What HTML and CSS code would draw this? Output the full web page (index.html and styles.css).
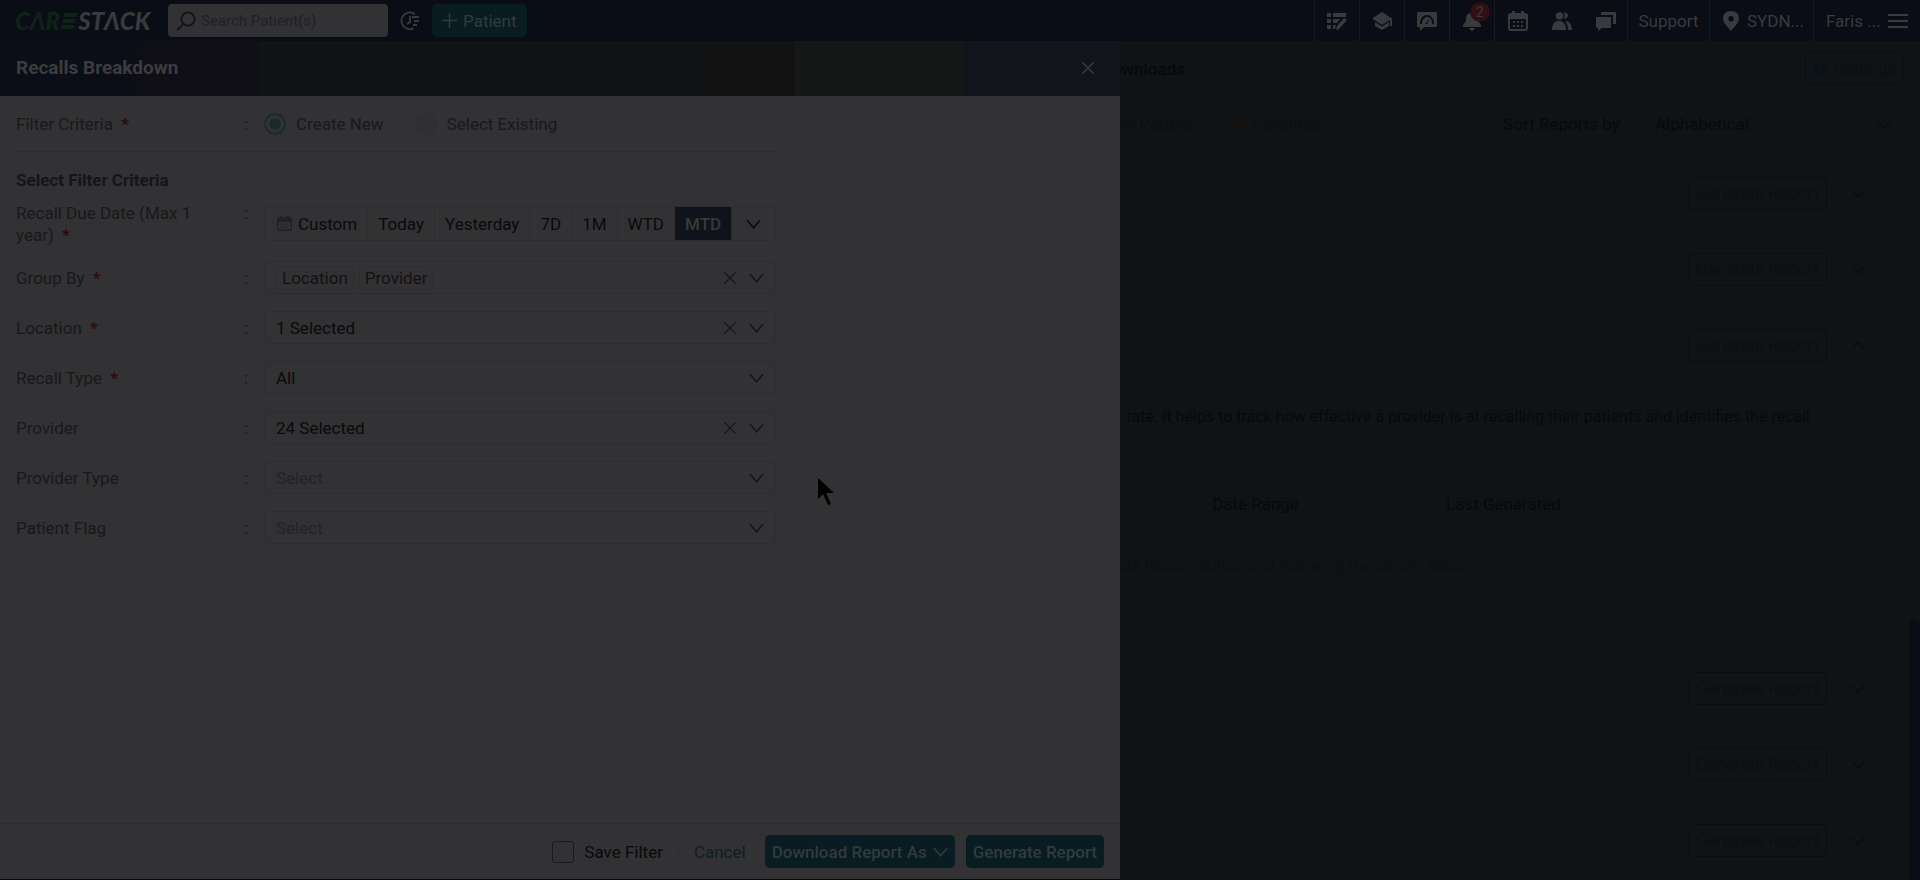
FILE: index.html
```html
<!DOCTYPE html>
<html lang="en">
  <head>
    <meta charset="UTF-8">
    <title>CareStack : Recalls Breakdown</title>
    <link rel="stylesheet" href="styles.css">
  </head>
  <body>
    <svg class="sprite" width="0" height="0">
      <symbol id="chevron" viewBox="0 0 16 10"><path d="M1 1l7 8 7-8" fill="none" stroke="currentColor" stroke-width="1.7"/></symbol>
      <symbol id="cross" viewBox="0 0 12 12"><path d="M.5.5l11 11M11.5.5l-11 11" fill="none" stroke="currentColor" stroke-width="1.4"/></symbol>
      <symbol id="calendar" viewBox="0 0 20 20"><path fill="currentColor" fill-rule="evenodd" d="M3 2h1V0h3v2h6V0h3v2h1q3 0 3 3v12q0 3-3 3H3q-3 0-3-3V5q0-3 3-3zM2 8v9q0 1 1 1h14q1 0 1-1V8zm3 2h2v2H5zm4 0h2v2H9zm4 0h2v2h-2zm-8 4h2v2H5zm4 0h2v2H9zm4 0h2v2h-2z"/></symbol>
    </svg>

    <header class="topbar">
      <a href="#" class="logo">
        <span>CΛR</span>
        <svg width="18" height="16" viewBox="0 0 17 16"><path fill="currentColor" d="M4 0h13l-1 4H3zM3 6h12l-1 4H2zM1 12h13l-1 4H0z"/></svg>
        STΛCK
      </a>
      <div class="search">
        <svg width="20" height="20" viewBox="0 0 20 20"><g fill="none" stroke="currentColor" stroke-width="1.7"><circle cx="12" cy="8" r="6.6"/><path d="M7.4 12.8L1 19.4"/></g></svg>
        <input type="text" placeholder="Search Patient(s)" aria-label="Search Patient(s)">
      </div>
      <button class="recent" aria-label="Recent patients">
        <svg width="20" height="20" viewBox="0 0 20 20"><path d="M15 3.2A8.4 8.4 0 1 0 13.5 17.4M10 5v6l-3 2M12 6h7M14 10h5M13 14h4" fill="none" stroke="currentColor" stroke-width="1.8"/></svg>
      </button>
      <button class="btn add-patient">
        <svg width="15" height="15" viewBox="0 0 15 15"><path d="M7.5 0v15M0 7.5h15" stroke="currentColor" stroke-width="1.5"/></svg>
        Patient
      </button>
      <nav class="tools">
        <a href="#" class="tool" aria-label="Tasks">
          <svg width="20" height="20" viewBox="0 0 20 20"><path fill="currentColor" d="M0 2h4v4H0zm6 0h13v4H6zM0 8h4v4H0zm6 0h7l-3 4H6zm-6 6h4v4H0zm6 0h3l-1 4H6zM17 7l3 2-8 9-3 1 1-4z"/></svg>
        </a>
        <a href="#" class="tool" aria-label="Learning">
          <svg width="20" height="20" viewBox="0 0 20 20"><path fill="currentColor" d="M10 1l10 6.5V15h-2V9l-8 5L0 7.500zM3 11l7 4.500 7-4.500v4l-7 4-7-4z"/></svg>
        </a>
        <a href="#" class="tool" aria-label="Insights">
          <svg width="20" height="20" viewBox="0 0 20 20"><path fill="currentColor" fill-rule="evenodd" d="M1 1h18q1 0 1 1v13q0 1-1 1H7l-4 4v-4H1q-1 0-1-1V2q0-1 1-1zM3 13h2c0-9 10-9 10-1v1h2C17 1 3 1 3 13zm5 0h2l3-6z"/></svg>
        </a>
        <a href="#" class="tool" aria-label="Notifications">
          <svg width="20" height="20" viewBox="0 0 20 20"><path fill="currentColor" d="M10 0q2 0 2 2c4 1 4 4 4 8l3 4v2H1v-2l3-4c0-4 0-7 4-8q0-2 2-2zM7 17h6q-1 3-3 3t-3-3z"/></svg>
          <span class="badge">2</span>
        </a>
        <div class="tool-group">
          <a href="#" aria-label="Calendar"><svg width="20" height="20"><use href="#calendar"/></svg></a>
          <a href="#" aria-label="Patients"><svg width="20" height="20" viewBox="0 0 20 20"><g fill="currentColor"><circle cx="7.500" cy="5" r="3.700"/><path d="M0 18c0-11 14-11 14 0v1H0zM11.500 1.500c6-1 6 7 0 6 1.500-2 1.500-4 0-6zM13 10c5 0 7 4 7 9h-4c0-4-1-7-3-9z"/></g></svg></a>
          <a href="#" aria-label="Messages"><svg width="20" height="20" viewBox="0 0 20 20"><path fill="currentColor" d="M6 1h13q1 0 1 1v11h-3V4H5V2q0-1 1-1zM1 6h13q1 0 1 1v9q0 1-1 1H6l-4 3v-3H1q-1 0-1-1V7q0-1 1-1z"/></svg></a>
        </div>
        <a href="#" class="support">Support</a>
        <a href="#" class="place">
          <svg width="16" height="20" viewBox="0 0 16 20"><path fill="currentColor" fill-rule="evenodd" d="M8 0c5 0 8 3 8 7.500C16 12 11 16 8 20 5 16 0 12 0 7.500 0 3 3 0 8 0zm0 5a2.800 2.800 0 1 0 .1 0z"/></svg>
          SYDN...
        </a>
        <a href="#" class="user">
          Faris ...
          <svg width="20" height="16" viewBox="0 0 20 16"><path d="M0 2h20M0 8h20M0 14h20" stroke="currentColor" stroke-width="2"/></svg>
        </a>
      </nav>
    </header>

    <main class="page">
      <div class="page-head">
        <a href="#" class="tab">Downloads</a>
        <button class="outline settings">
          <svg width="15" height="15" viewBox="0 0 16 16"><g fill="none" stroke="currentColor"><circle cx="8" cy="8" r="4" stroke-width="3"/><path d="M8 0v3M8 13v3M1 4l3 2M12 10l3 2M1 12l3-2M12 6l3-2" stroke-width="3"/></g></svg>
          Settings
        </button>
      </div>
      <div class="page-filters">
        <a href="#" class="quick">New Patient</a>
        <a href="#" class="quick favorites">
          <svg width="16" height="16" viewBox="0 0 16 16"><path fill="currentColor" d="M8 0l2.300 5.300L16 6l-4.200 3.800L13 16l-5-3.200L3 16l1.200-6.200L0 6l5.700-.7z"/></svg>
          Favorites
        </a>
        <label class="sort-label" for="sort">Sort Reports by</label>
        <span>:</span>
        <div class="sort">
          <select id="sort"><option>Alphabetical</option></select>
          <svg class="arrow" width="15" height="9"><use href="#chevron"/></svg>
        </div>
      </div>

      <section class="reports">
        <div class="report"><button class="outline">Generate Report</button><svg class="arrow" width="15" height="9"><use href="#chevron"/></svg></div>
        <div class="report"><button class="outline">Generate Report</button><svg class="arrow" width="15" height="9"><use href="#chevron"/></svg></div>
        <div class="report"><button class="outline">Generate Report</button><svg class="arrow up" width="15" height="9"><use href="#chevron"/></svg></div>
        <div class="details">
          <p class="about">rate. It helps to track how effective a provider is at recalling their patients and identifies the recall</p>
          <table class="history">
            <thead><tr><th>Date Range</th><th>Last Generated</th></tr></thead>
          </table>
          <p class="empty">clicking the 'Generate Report' button and following the simple steps.</p>
        </div>
        <div class="report"><button class="outline">Generate Report</button><svg class="arrow" width="15" height="9"><use href="#chevron"/></svg></div>
        <div class="report"><button class="outline">Generate Report</button><svg class="arrow" width="15" height="9"><use href="#chevron"/></svg></div>
        <div class="report"><button class="outline">Generate Report</button><svg class="arrow" width="15" height="9"><use href="#chevron"/></svg></div>
      </section>
      <div class="scrollbar"></div>
    </main>

    <form class="drawer">
      <div class="drawer-head">
        <h1>Recalls Breakdown</h1>
        <button type="button" class="close" aria-label="Close"><svg width="12" height="12"><use href="#cross"/></svg></button>
      </div>

      <div class="drawer-body">
        <div class="row criteria">
          <span class="label">Filter Criteria <b>*</b></span><span>:</span>
          <div class="radios">
            <label><input type="radio" name="criteria" checked>Create New</label>
            <label><input type="radio" name="criteria">Select Existing</label>
          </div>
        </div>

        <h2>Select Filter Criteria</h2>

        <div class="row due">
          <span class="label">Recall Due Date (Max 1 year) <b>*</b></span><span>:</span>
          <div class="range">
            <button type="button" class="custom"><svg width="15" height="15"><use href="#calendar"/></svg>Custom</button>
            <button type="button">Today</button>
            <button type="button">Yesterday</button>
            <button type="button">7D</button>
            <button type="button">1M</button>
            <button type="button">WTD</button>
            <button type="button" class="active">MTD</button>
            <button type="button" class="more" aria-label="More ranges"><svg width="15" height="10"><use href="#chevron"/></svg></button>
          </div>
        </div>

        <div class="fields">
          <div class="row">
            <span class="label">Group By <b>*</b></span><span>:</span>
            <div class="field">
              <div class="chips"><span>Location</span><span>Provider</span></div>
              <button type="button" class="clear" aria-label="Clear"><svg width="12" height="12"><use href="#cross"/></svg></button>
              <svg class="arrow" width="15" height="10"><use href="#chevron"/></svg>
            </div>
          </div>
          <div class="row">
            <label class="label" for="location">Location <b>*</b></label><span>:</span>
            <div class="field">
              <select id="location"><option>1 Selected</option></select>
              <button type="button" class="clear" aria-label="Clear"><svg width="12" height="12"><use href="#cross"/></svg></button>
              <svg class="arrow" width="15" height="10"><use href="#chevron"/></svg>
            </div>
          </div>
          <div class="row">
            <label class="label" for="recall-type">Recall Type <b>*</b></label><span>:</span>
            <div class="field">
              <select id="recall-type"><option>All</option></select>
              <svg class="arrow" width="15" height="10"><use href="#chevron"/></svg>
            </div>
          </div>
          <div class="row">
            <label class="label" for="provider">Provider</label><span>:</span>
            <div class="field">
              <select id="provider"><option>24 Selected</option></select>
              <button type="button" class="clear" aria-label="Clear"><svg width="12" height="12"><use href="#cross"/></svg></button>
              <svg class="arrow" width="15" height="10"><use href="#chevron"/></svg>
            </div>
          </div>
          <div class="row">
            <label class="label" for="provider-type">Provider Type</label><span>:</span>
            <div class="field">
              <select id="provider-type" class="blank"><option>Select</option></select>
              <svg class="arrow" width="15" height="10"><use href="#chevron"/></svg>
            </div>
          </div>
          <div class="row">
            <label class="label" for="patient-flag">Patient Flag</label><span>:</span>
            <div class="field">
              <select id="patient-flag" class="blank"><option>Select</option></select>
              <svg class="arrow" width="15" height="10"><use href="#chevron"/></svg>
            </div>
          </div>
        </div>
      </div>

      <div class="drawer-foot">
        <label class="save"><input type="checkbox">Save Filter</label>
        <a href="#" class="cancel">Cancel</a>
        <button type="button" class="btn download">Download Report As <svg width="15" height="10"><use href="#chevron"/></svg></button>
        <button type="button" class="btn">Generate Report</button>
      </div>
    </form>

    <svg class="cursor" width="16" height="28" viewBox="0 0 16 28"><path d="M0 0v21l5-5 5 11 3-1-5-11h8z"/></svg>
  </body>
</html>
```
FILE: styles.css
```css
:root {
  --bar: #0a0d16;
  --page: #0f1315;
  --panel: #323133;
  --line: #2d2d2e;
  --label: #18191b;
  --ink: #0a0a0b;
  --teal: #081c21;
}
* {
  box-sizing: border-box;
}
body {
  margin: 0;
  height: 100vh;
  display: flex;
  flex-direction: column;
  position: relative;
  overflow: hidden;
  background: var(--page);
  color: var(--ink);
  font-family: Roboto, "Liberation Sans", sans-serif;
  font-size: 17px;
  line-height: 22px;
}
button, input, select {
  font: inherit;
  color: inherit;
  margin: 0;
  padding: 0;
  border: 0;
  background: none;
}
select {
  appearance: none;
}
a {
  color: inherit;
  text-decoration: none;
}
svg {
  display: block;
  flex: none;
}
h1, h2, p {
  margin: 0;
}
.sprite {
  position: absolute;
}

/* top bar */
.topbar {
  flex: none;
  height: 41px;
  display: flex;
  align-items: center;
  background: var(--bar);
  color: #393a3d;
}
.logo {
  width: 153px;
  padding-left: 15px;
  display: flex;
  align-items: center;
  font: italic 900 24px/24px Lato, sans-serif;
  white-space: nowrap;
}
.logo span, .logo svg {
  color: #0f2218;
}
.search {
  width: 220px;
  height: 33px;
  margin-left: 15px;
  padding: 0 8px;
  display: flex;
  align-items: center;
  gap: 5px;
  background: var(--panel);
  border-radius: 4px;
  color: #111214;
}
.search input {
  flex: 1;
  min-width: 0;
  font-size: 15px;
}
.search input::placeholder {
  color: #202224;
  opacity: 1;
}
.recent {
  margin: 0 12px;
}
.btn {
  height: 33px;
  display: flex;
  align-items: center;
  gap: 6px;
  padding: 0 7px;
  border-radius: 5px;
  background: var(--teal);
  color: #343a3c;
  font-weight: 500;
}
.add-patient {
  padding: 0 10px;
  font-weight: 400;
}
.tools {
  margin-left: auto;
  height: 100%;
  display: flex;
}
.tools > * {
  display: flex;
  align-items: center;
  border-left: 1px solid #16191f;
}
.tool {
  width: 45px;
  justify-content: center;
  position: relative;
}
.badge {
  position: absolute;
  left: 20px;
  top: 2px;
  width: 20px;
  height: 20px;
  border-radius: 50%;
  background: #2f0f12;
  font-size: 14px;
  line-height: 20px;
  text-align: center;
}
.tool-group {
  width: 133px;
  padding-left: 13px;
  gap: 24px;
}
.support {
  width: 82px;
  justify-content: center;
}
.place {
  width: 104px;
  padding-left: 13px;
  gap: 8px;
}
.user {
  width: 107px;
  padding: 0 12px;
  justify-content: space-between;
}

/* reports page */
.page {
  flex: 1;
  position: relative;
  display: flex;
  flex-direction: column;
  padding-right: 16px;
  color: #07090b;
}
.page-head, .page-filters {
  display: flex;
  align-items: center;
  justify-content: flex-end;
}
.page-head {
  height: 55px;
}
.tab {
  font-weight: 500;
}
.outline {
  height: 33px;
  padding: 0 7px;
  border: 1px solid #0a0e10;
  border-radius: 5px;
  color: #0a0f13;
}
.settings {
  display: flex;
  align-items: center;
  gap: 6px;
  margin-left: 620px;
}
.settings svg {
  color: #08111a;
}
.page-filters {
  height: 56px;
}
.quick {
  color: #0b0f13;
  padding-right: 14px;
}
.favorites {
  display: flex;
  align-items: center;
  gap: 6px;
  padding: 0 0 0 22px;
  border-left: 1px solid #0d1113;
}
.favorites svg {
  color: #14110c;
}
.sort-label {
  margin: 0 15px 0 182px;
}
.sort {
  width: 262px;
  margin-left: 3px;
  padding: 0 13px 0 13px;
  display: flex;
  align-items: center;
}
.sort select {
  flex: 1;
}
.sort .arrow {
  color: #0b0e10;
}
.reports {
  flex: 1;
  padding-top: 3px;
}
.report {
  height: 76px;
  display: flex;
  align-items: center;
  justify-content: flex-end;
  gap: 24px;
  padding-right: 38px;
}
.report .arrow {
  color: #0a0d0f;
}
.up {
  transform: rotate(180deg);
}
.details {
  height: 267px;
  padding-top: 23px;
}
.about, .empty {
  font-size: 16px;
  text-align: right;
  white-space: nowrap;
}
.about {
  padding-right: 94px;
}
.history {
  margin: 65px 0 0 auto;
  border-spacing: 0;
}
.history th {
  padding: 0;
  text-align: left;
  font-weight: 400;
}
.history th:first-child {
  width: 234px;
}
.history th:last-child {
  width: 458px;
}
.empty {
  margin-top: 40px;
  padding-right: 434px;
  color: #0d0f12;
}
.scrollbar {
  position: absolute;
  right: 0;
  bottom: 0;
  width: 11px;
  height: 260px;
  border-radius: 6px 6px 0 0;
  background: #090b15;
}

/* drawer */
.drawer {
  position: absolute;
  top: 41px;
  bottom: 0;
  left: 0;
  width: calc(100% * 7 / 12);
  display: flex;
  flex-direction: column;
  background: var(--panel);
  border-bottom: 1px solid #0b080b;
  color: var(--label);
}
.drawer-head {
  height: 55px;
  flex: none;
  display: flex;
  align-items: center;
  justify-content: space-between;
  padding: 0 26px 2px 16px;
  background: linear-gradient(90deg, #0b0e17 10%, #100f15 14% 23%, #0f1315 23% 63%, #121213 63% 71%, #131715 71% 86%, #11141b 86%);
  color: #3c3c3e;
}
.drawer-head h1 {
  font-size: 19px;
  font-weight: 700;
}
.drawer-body {
  flex: 1;
  width: 776px;
  padding-left: 16px;
}
.row {
  display: grid;
  grid-template-columns: 228px 20px 1fr;
  align-items: center;
}
.label {
  padding-right: 50px;
}
.label b {
  margin-left: 4px;
  color: #2c0b0d;
}
.criteria {
  height: 56px;
  border-bottom: 1px solid #2c2d2d;
}
.radios {
  display: flex;
  gap: 31px;
}
.radios label, .save {
  display: flex;
  align-items: center;
  gap: 10px;
}
.radios input {
  appearance: none;
  width: 22px;
  height: 22px;
  border: 1px solid #2e2e33;
  border-radius: 50%;
  background: #302f35;
}
.radios input:checked {
  border: 2px solid #1e2a2b;
  background: radial-gradient(circle, #1a2829 5px, transparent 6px);
}
h2 {
  margin: 17px 0 11px;
  font-size: 17px;
  line-height: 22px;
  font-weight: 700;
  color: #14161b;
}
.due {
  align-items: start;
}
.range {
  height: 35px;
  margin-top: 4px;
  display: flex;
  border: 1px solid var(--line);
  border-radius: 5px;
  color: var(--ink);
}
.range button {
  padding: 0 10px;
  border-right: 1px solid var(--line);
}
.range .custom {
  display: flex;
  align-items: center;
  gap: 6px;
  padding-left: 12px;
}
.custom svg {
  color: #1f2224;
}
.range .active {
  background: #10131b;
  color: #393a3c;
  font-weight: 500;
}
.range .more {
  flex: 1;
  border: 0;
  display: flex;
  align-items: center;
  justify-content: center;
  padding: 0;
}
.fields {
  margin-top: 15px;
  display: grid;
  gap: 17px;
}
.field {
  height: 33px;
  display: grid;
  grid-template-columns: 1fr 27px 27px;
  align-items: center;
  border: 1px solid var(--line);
  border-radius: 5px;
  padding-right: 5px;
}
.field > * {
  grid-row: 1;
}
.field select {
  grid-column: 1 / -1;
  height: 31px;
  padding-left: 11px;
  color: var(--ink);
}
.field .blank {
  color: #232427;
}
.field .clear {
  grid-column: 2;
  justify-self: center;
  color: #19191b;
}
.field .arrow {
  grid-column: 3;
  justify-self: center;
  pointer-events: none;
  color: #161618;
}
.chips {
  display: flex;
  gap: 5px;
  padding-left: 11px;
  color: #121214;
}
.chips span {
  padding: 0 5px;
  border: 1px solid var(--line);
  border-radius: 5px;
}
.drawer-foot {
  height: 56px;
  flex: none;
  display: flex;
  align-items: center;
  justify-content: flex-end;
  padding-right: 16px;
  border-top: 1px solid #2c2c2d;
}
.save {
  padding-right: 15px;
  border-right: 1px solid #2e2e2e;
  color: var(--ink);
}
.save input {
  appearance: none;
  width: 22px;
  height: 22px;
  border: 1px solid #1b1c1e;
  border-radius: 3px;
}
.cancel {
  margin: 0 19px 0 15px;
  color: #0d1f21;
}
.download {
  margin-right: 11px;
}

.cursor {
  position: absolute;
  left: 818px;
  top: 478px;
}
```
